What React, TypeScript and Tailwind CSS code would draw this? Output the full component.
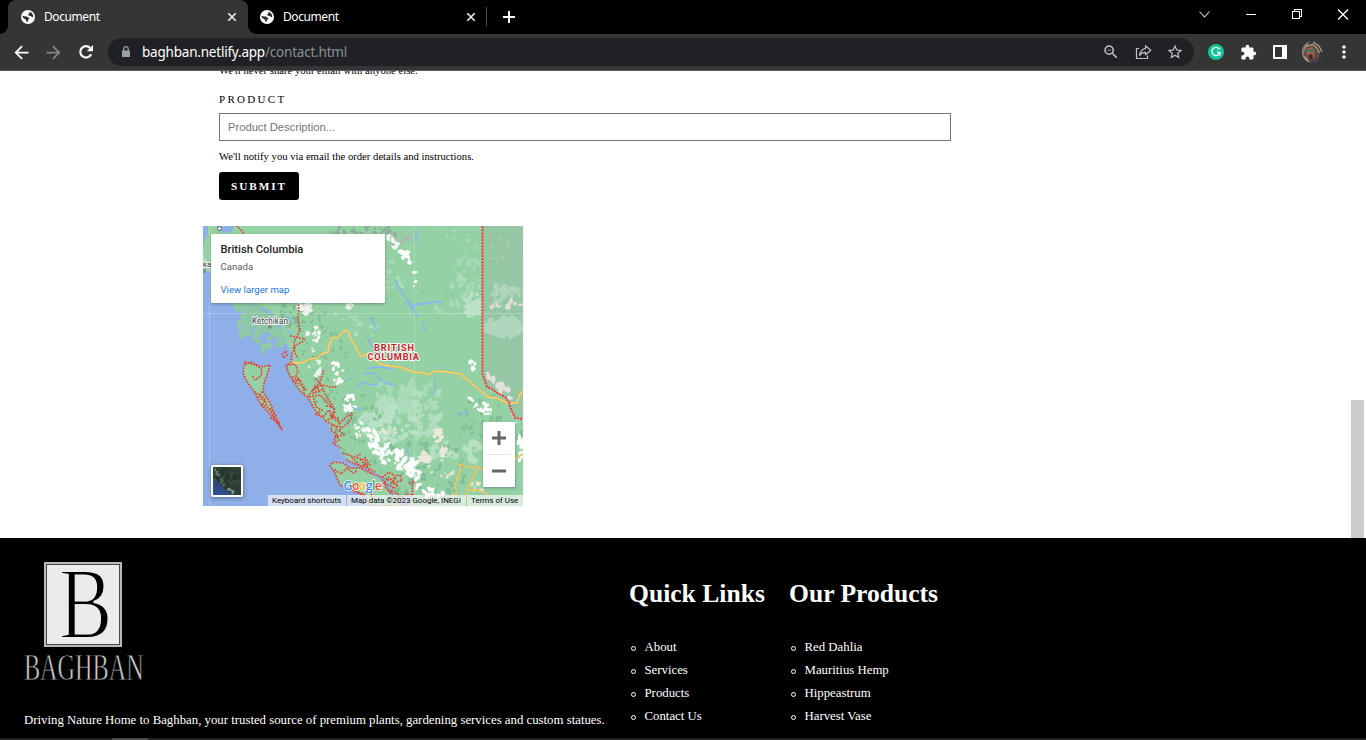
import type { ReactNode } from "react";
import {
  MdArrowBack,
  MdArrowForward,
  MdExtension,
  MdMoreVert,
  MdStarBorder,
  MdZoomOut,
} from "react-icons/md";

function createRandom(seed: number) {
  let s = seed;
  return () => {
    s = (s * 16807) % 2147483647;
    return s / 2147483647;
  };
}

type Patch = { x: number; y: number; rx: number; ry: number; n: number; size: number; fill: string; lean?: number };

// Groups of small terrain shapes: snow, grassland, bare ground and relief shading.
const patches: Patch[] = [
  { x: 185, y: 168, rx: 26, ry: 14, n: 22, size: 8, fill: "#a9dbb8" },
  { x: 200, y: 190, rx: 38, ry: 26, n: 44, size: 10, fill: "#b0debe" },
  { x: 188, y: 198, rx: 30, ry: 20, n: 24, size: 11, fill: "#b8e1c5" },
  { x: 216, y: 172, rx: 22, ry: 18, n: 26, size: 8, fill: "#abdcba" },
  { x: 250, y: 225, rx: 30, ry: 14, n: 18, size: 9, fill: "#b7e0c3" },
  { x: 272, y: 80, rx: 9, ry: 12, n: 14, size: 10, fill: "#b9e1c5" },
  { x: 262, y: 60, rx: 18, ry: 10, n: 14, size: 7, fill: "#aadbb8" },
  { x: 265, y: 38, rx: 14, ry: 8, n: 12, size: 7, fill: "#a6d9b4" },
  { x: 248, y: 82, rx: 16, ry: 8, n: 7, size: 6, fill: "#abdcba" },
  { x: 258, y: 18, rx: 24, ry: 14, n: 10, size: 4, fill: "#a5dab3" },
  { x: 190, y: 55, rx: 12, ry: 20, n: 14, size: 5, fill: "#addeb9" },
  { x: 150, y: 100, rx: 25, ry: 18, n: 12, size: 5, fill: "#addeb9" },
  { x: 88, y: 85, rx: 12, ry: 16, n: 36, size: 4, fill: "#7fb394" },
  { x: 110, y: 95, rx: 16, ry: 20, n: 22, size: 4, fill: "#85b996" },
  { x: 120, y: 140, rx: 26, ry: 38, n: 66, size: 4, fill: "#84bf96" },
  { x: 155, y: 205, rx: 25, ry: 40, n: 60, size: 4, fill: "#83be95" },
  { x: 215, y: 245, rx: 55, ry: 30, n: 90, size: 5, fill: "#80bc94" },
  { x: 290, y: 200, rx: 35, ry: 36, n: 50, size: 5, fill: "#81be95" },
  { x: 220, y: 90, rx: 65, ry: 60, n: 40, size: 2.5, fill: "#89c89c" },
  { x: 159, y: 6, rx: 36, ry: 8, n: 30, size: 5, fill: "#8dab9c" },
  { x: 194, y: 14, rx: 15, ry: 8, n: 16, size: 5, fill: "#a7bbae" },
  { x: 190, y: 16, rx: 6, ry: 8, n: 12, size: 5, fill: "#f4f6f2", lean: 0.9 },
  { x: 204, y: 30, rx: 6, ry: 12, n: 14, size: 5, fill: "#ffffff", lean: 0.6 },
  { x: 212, y: 56, rx: 2, ry: 11, n: 4, size: 4, fill: "#ffffff" },
  { x: 101, y: 83, rx: 6, ry: 6, n: 16, size: 7, fill: "#edf2ea" },
  { x: 148, y: 80, rx: 5, ry: 3, n: 7, size: 5, fill: "#e9efe6" },
  { x: 110, y: 113, rx: 7, ry: 15, n: 12, size: 5, fill: "#f1f6ef" },
  { x: 112, y: 142, rx: 6, ry: 9, n: 8, size: 5, fill: "#eaf3e9" },
  { x: 134, y: 146, rx: 7, ry: 12, n: 14, size: 5, fill: "#f7f9f5" },
  { x: 146, y: 178, rx: 7, ry: 9, n: 17, size: 5, fill: "#ffffff" },
  { x: 155, y: 204, rx: 7, ry: 10, n: 10, size: 5, fill: "#f4f7f2" },
  { x: 170, y: 214, rx: 6, ry: 22, n: 26, size: 6, fill: "#ffffff", lean: 1 },
  { x: 183, y: 228, rx: 6, ry: 9, n: 12, size: 6, fill: "#ffffff" },
  { x: 204, y: 237, rx: 14, ry: 20, n: 34, size: 6, fill: "#ffffff", lean: 0.5 },
  { x: 215, y: 252, rx: 5, ry: 10, n: 12, size: 5, fill: "#f7f8f4" },
  { x: 231, y: 267, rx: 10, ry: 5, n: 13, size: 5, fill: "#ffffff" },
  { x: 279, y: 181, rx: 13, ry: 12, n: 20, size: 5, fill: "#ffffff", lean: 0.6 },
  { x: 269, y: 139, rx: 4, ry: 6, n: 6, size: 5, fill: "#ffffff" },
  { x: 314, y: 189, rx: 7, ry: 8, n: 14, size: 5, fill: "#efece6" },
  { x: 317, y: 222, rx: 3, ry: 16, n: 12, size: 5, fill: "#ffffff" },
  { x: 235, y: 210, rx: 5, ry: 6, n: 10, size: 7, fill: "#ede9dc" },
  { x: 241, y: 226, rx: 3, ry: 14, n: 12, size: 5, fill: "#ede9dc", lean: 0.8 },
  { x: 221, y: 232, rx: 5, ry: 6, n: 12, size: 7, fill: "#ebe7d9" },
  { x: 185, y: 209, rx: 9, ry: 10, n: 9, size: 5, fill: "#e7e5d6" },
  { x: 236, y: 245, rx: 16, ry: 11, n: 9, size: 4, fill: "#e6e5d3" },
  { x: 275, y: 260, rx: 8, ry: 7, n: 8, size: 5, fill: "#ebe6d4" },
];

const eastPatches: Patch[] = [
  { x: 302, y: 70, rx: 18, ry: 10, n: 24, size: 8, fill: "#aed4ba" },
  { x: 302, y: 101, rx: 20, ry: 8, n: 38, size: 10, fill: "#b1d6bf" },
  { x: 298, y: 20, rx: 18, ry: 18, n: 10, size: 5, fill: "#a4cdb1" },
  { x: 302, y: 79, rx: 18, ry: 5, n: 13, size: 5, fill: "#e4ddd9" },
  { x: 296, y: 160, rx: 13, ry: 10, n: 22, size: 6, fill: "#e3e1db", lean: 0.8 },
];

const islandPatches: Patch[] = [
  { x: 42, y: 84, rx: 14, ry: 8, n: 22, size: 8, fill: "#8fc9a6" },
  { x: 58, y: 90, rx: 18, ry: 13, n: 46, size: 9, fill: "#8dc4a5" },
  { x: 43, y: 103, rx: 8, ry: 15, n: 18, size: 7, fill: "#8fc9a6" },
  { x: 60, y: 112, rx: 9, ry: 14, n: 18, size: 7, fill: "#8fc9a6" },
  { x: 75, y: 106, rx: 9, ry: 16, n: 30, size: 8, fill: "#8fc9a6" },
  { x: 4, y: 22, rx: 6, ry: 24, n: 30, size: 7, fill: "#8fc9a6" },
  { x: 4, y: 38, rx: 5, ry: 12, n: 9, size: 5, fill: "#c2d6ca" },
];

function renderPatches(items: Patch[], seed: number): ReactNode[] {
  const rand = createRandom(seed);
  return items.map((p, i) => {
    let d = "";
    for (let k = 0; k < p.n; k++) {
      const a = rand() * Math.PI * 2;
      const q = Math.sqrt(rand());
      const ox = Math.cos(a) * q * p.rx;
      const cx = p.x + ox;
      const cy = p.y + Math.sin(a) * q * p.ry * (p.lean ? 0.6 : 1) + ox * (p.lean ?? 0);
      const r = p.size * (0.3 + rand() * 0.5);
      const tilt = rand() * 3;
      for (let j = 0; j < 8; j++) {
        const t = (j / 8) * Math.PI * 2;
        const m = r * (0.5 + rand() * 0.65);
        const px = Math.cos(t) * m;
        const py = Math.sin(t) * m * 0.65;
        const x = cx + px * Math.cos(tilt) - py * Math.sin(tilt);
        const y = cy + px * Math.sin(tilt) + py * Math.cos(tilt);
        d += `${j ? "L" : "M"}${x.toFixed(1)} ${y.toFixed(1)}`;
      }
      d += "Z";
    }
    return <path key={i} d={d} fill={p.fill} />;
  });
}

const mainland =
  "M0 0H320V280H204L210 269 199 273 188 268 184 258 178 250 164 243 154 238 145 235 140 229 134 220 132 211 125 197 112 187 108 175 97 166 89 154 84 139 91 132 88 126 84 118 80 106 76 92 66 84 56 78 42 70 22 60 8 52 5 36 0 30Z";
const haida =
  "M42 136L52 139 58 141 67 139 64 149 61 157 60 166 67 177 72 189 79 204 69 190 58 179 52 167 43 154 40 147Z";
const vancouver =
  "M127 240L130 236 140 237 147 242 157 242 167 247 178 251 184 262 190 270 200 280H168L160 268 150 264 143 262 137 259 132 247Z";
const highway =
  "M87 136L94 137 99 137 107 133 115 132 118 128 125 126 126 119 129 112 135 112 138 108 142 104 146 107 147 112 152 119 156 128 159 131 165 127 172 134 177 138 186 140 197 141 208 145 214 147 219 146 225 149 232 145 245 146 257 148 266 155 274 162 285 171 293 172 304 177 314 177 317 168 320 165";
const eastRegion = "M280 0H320V196L312 192 307 181 302 171 294 167 284 161 280 148Z";
const eastBorder = "M279.500 0V149L282 155 284 161 289 163 294 167 302 171 306 176 307 181 312 192 320 193";

function MapDrawing() {
  return (
    <svg width="320" height="280" viewBox="0 0 320 280" className="block">
      <defs>
        <clipPath id="land">
          <path d={mainland} />
        </clipPath>
        <clipPath id="east">
          <path d={eastRegion} />
        </clipPath>
      </defs>
      <rect width="320" height="280" fill="#8fafe8" />
      {renderPatches(islandPatches, 913)}
      <path d={mainland} fill="#94d2a5" />
      <g clipPath="url(#land)">{renderPatches(patches, 481)}</g>
      <path d={eastRegion} fill="#95c7a4" />
      <g clipPath="url(#east)">{renderPatches(eastPatches, 77)}</g>
      <path d={haida} fill="#94d2a5" />
      <path d={vancouver} fill="#94d2a5" />
      <path d="M0 0H5V8L2 14 0 20ZM14 0H31L28 6 20 7Z" fill="#8fafe8" />
      <g fill="none" stroke="#8ab4f0" strokeLinecap="round" strokeLinejoin="round">
        <path d="M192 54L197 64 203 72 208 79 214 90" strokeWidth="1.800" />
        <path d="M204 75L208 80 211 85M207 80L217 78 226 77 233 75 239 77M219 96L222 104" strokeWidth="1.800" />
        <path d="M167 91L172 99 175 105M164 110L167 117 172 125M213 3V16M250 69V71" strokeWidth="1.500" />
        <path d="M84 90L88 96M84 104L88 108" strokeWidth="1.500" />
        <path d="M160 148L171 147 178 154 184 157 192 160M152 162L160 156 168 159 175 158" strokeWidth="1.400" />
        <path d="M164 142L178 141 190 143M254 189L261 186 267 187" strokeWidth="1.300" />
        <path d="M231 151L233 161 230 169M203 221L206 230M238 138L241 145M298 242L301 235M144 155L151 150" strokeWidth="1" />
        <path d="M149 181L156 184 161 182M140 194L147 199M111 162L116 153M126 188L131 181" strokeWidth="1.200" />
        <path d="M312 243V262" strokeWidth="2" />
        <path d="M173 249L185 259 189 270" strokeWidth="2.500" />
        <path d="M203 222L206 230" strokeWidth="1.500" />
      </g>
      <path d="M6.500 0V280M211.500 0V280M0 87.500H320" stroke="#fff" strokeOpacity=".22" fill="none" />
      <g fill="none" strokeLinejoin="round">
        <path d={highway} stroke="#e9b955" strokeWidth="2" />
        <path d={highway} stroke="#fddc7d" strokeWidth="1" />
        <path d="M254 267L252 262 254 252 256 250 258 240 255 238 262 240 270 242 273 240 277 243 285 244M262 273L265 262 268 256 271 249 274 243M266 264L275 264 285 268M312 233L320 228M247 271L254 267" stroke="#eac469" strokeWidth="1.800" />
      </g>
      <g fill="none" stroke="#e5443a" strokeWidth="1.900" strokeLinecap="round" strokeLinejoin="round" strokeDasharray="0.1 2.900">
        <path d="M34 0L40 6 43 12M95 76L96 84 95 93 97 104 94 110 91 116 92 123 89 127 88 137 83 140 86 148 90 154 97 165 105 172 112 184 124 196" />
        <path d={haida} />
        <path d={vancouver} />
        <path d="M43 138L48 136 54 139 59 144 58 150 52 154 50 151M52 166L61 172 64 181 70 189 75 199M59 166L56 171 63 176 58 179 68 183 73 190 68 192 77 197" />
        <path d="M88 110L97 112 102 113 99 116 93 119 90 121 92 127 95 132M79 128L83 125 84 129 81 132Z" />
        <path d="M84 139L92 138 95 145 93 150 97 154 89 155 97 158 101 163 101 168" />
        <path d="M105 170L110 164 117 156 121 144M110 164L118 159 128 161 133 161M107 171L117 169 125 177 131 183 130 192 137 197 144 190 149 187 148 193 144 198 136 204 141 209 130 211" />
        <path d="M111 173L113 181 119 184 112 188 120 191 126 184 130 191 123 195 134 201 132 207 136 214 130 217 139 223" />
        <path d="M124 180L131 181 132 187 127 190 135 192 137 201 129 199 128 204 134 209 131 214M112 160L116 164 109 168 119 164" />
        <path d="M140 227L151 231 162 234 167 239 157 240 149 232 158 228M144 234L152 238 164 242 169 248M159 242L164 234 161 231" />
        <path d="M113 153L119 160 122 168 125 173 129 178 127 181M90 151L98 156 103 164" />
        <path d="M180 251L186 246 192 250 197 249 199 254 191 257 185 251 181 257 190 261 188 266 194 267 199 273 203 268 210 269 209 261 211 255 207 257" />
        <path d="M185 254L193 252 188 257 195 259 190 263M187 266L181 260M158 234L164 241 172 246" />
        <path d="M132 244L138 248 144 242 150 247 154 245M152 266L160 269 166 264 170 272 176 276" />
      </g>
      <path d={eastBorder} fill="none" stroke="#c9a798" strokeWidth="2" />
      <path d={eastBorder} fill="none" stroke="#e5443a" strokeWidth="2" strokeDasharray="2 1.200" />
      <g fontFamily="Roboto, sans-serif" stroke="#fff" strokeWidth="1.800" paintOrder="stroke" strokeLinejoin="round">
        <text x="49" y="97.600" fontSize="8.200" fill="#3c4043" strokeOpacity=".8" textLength="36">Ketchikan</text>
        <text x="0" y="41" fontSize="8" fill="#3c4043" strokeOpacity=".8">ka</text>
        <text x="171" y="125" fontSize="9.200" fontWeight="700" fill="#c5221f" textLength="40">BRITISH</text>
        <text x="164.500" y="133.800" fontSize="9.200" fontWeight="700" fill="#c5221f" textLength="51.500">COLUMBIA</text>
      </g>
      <g fill="#fff" stroke="#555" strokeWidth="1">
        <circle cx="67" cy="101" r="1.200" />
        <circle cx="16.500" cy="2.500" r="2" />
        <circle cx="1" cy="45" r="1.200" />
      </g>
      <text x="140.500" y="263.500" fontFamily="'Open Sans', sans-serif" fontSize="12.500" fontWeight="600" textLength="38.500" stroke="#fff" strokeWidth="1.400" paintOrder="stroke" strokeLinejoin="round">
        <tspan fill="#4285f4">G</tspan>
        <tspan fill="#ea4335">o</tspan>
        <tspan fill="#fbbc05">o</tspan>
        <tspan fill="#4285f4">g</tspan>
        <tspan fill="#34a853">l</tspan>
        <tspan fill="#ea4335">e</tspan>
      </text>
    </svg>
  );
}

const thumbPatches: Patch[] = [
  { x: 16, y: 9, rx: 13, ry: 9, n: 26, size: 5, fill: "#24332c" },
  { x: 18, y: 14, rx: 10, ry: 9, n: 18, size: 4, fill: "#384a3d" },
  { x: 4, y: 5, rx: 3, ry: 5, n: 9, size: 3, fill: "#778882" },
  { x: 9, y: 14, rx: 3, ry: 6, n: 9, size: 3, fill: "#50645b", lean: 0.8 },
  { x: 18, y: 24, rx: 4, ry: 3, n: 7, size: 3, fill: "#8f9a90", lean: 0.8 },
];

function SatelliteThumb() {
  return (
    <svg width="28" height="28" viewBox="0 0 28 28" className="block">
      <rect width="28" height="28" fill="#2d3f35" />
      {renderPatches(thumbPatches, 35)}
      <path d="M0 11L3 12 6 17 10 20 14 24 19 28H0Z" fill="#304c8a" />
      <path d="M2 13L3 15 5 20 6 22 4 19Z" fill="#22332e" />
    </svg>
  );
}

function ContactMap() {
  return (
    <div className="relative -ml-4 mt-[26px] h-[280px] w-[320px] overflow-hidden font-['Roboto',sans-serif]">
      <MapDrawing />
      <div className="absolute left-2 top-2 flex h-[69px] w-[174px] flex-col rounded-[1px] bg-white pl-[9.500px] pt-2 shadow-[0_1px_3px_rgba(0,0,0,0.3)]">
        <div className="h-[15px] text-[11.200px] font-medium leading-[15px] text-[#222]">British Columbia</div>
        <div className="mt-[3px] h-[14px] text-[9.600px] leading-[14px] text-[#5b5b5b]">Canada</div>
        <div className="mt-[9px] h-[14px] text-[9.600px] leading-[14px] text-[#1a73e8]">View larger map</div>
      </div>
      <div className="absolute left-2 top-[239px] rounded-[2px] border-2 border-white shadow-[0_1px_4px_rgba(0,0,0,0.4)]">
        <SatelliteThumb />
      </div>
      <div className="absolute left-[280px] top-[196px] flex h-[65px] w-8 flex-col items-center rounded-[1px] bg-white shadow-[0_1px_3px_rgba(0,0,0,0.3)]">
        <svg width="32" height="65" viewBox="0 0 32 65">
          <path d="M9 16H23M16 9V23M9 49H23" stroke="#666" strokeWidth="3" />
          <path d="M4 32.500H28" stroke="#e6e6e6" />
        </svg>
      </div>
      <div className="absolute bottom-0 right-0 flex h-[11px] gap-px text-[8px] leading-[11px] text-black">
        <span className="w-[78px] whitespace-nowrap bg-[#f5f5f5]/70 pl-1 tracking-[-0.010px]">Keyboard shortcuts</span>
        <span className="w-[119px] whitespace-nowrap bg-[#f5f5f5]/70 pl-1 tracking-[-0.030px]">Map data ©2023 Google, INEGI</span>
        <span className="w-[56px] whitespace-nowrap bg-[#f5f5f5]/70 pl-1">Terms of Use</span>
      </div>
    </div>
  );
}

function Globe() {
  return (
    <svg width="14" height="14" viewBox="0 0 14 14">
      <circle cx="7" cy="7" r="7" fill="#fff" />
      <path d="M1.600 5.800L4 6.500 5.500 6.200 6.500 7.300 8 7.700 8.400 9 7 9.800 6.600 11.900 5.300 11.500 5 9.800 3.200 8.700 1.600 7.200Z" fill="#2b2b2b" />
      <path d="M8 1.900L10.300 2.600 11.800 4.400 12.300 6.800 11.200 7.200 9.800 5.900 7.600 5.500 6.900 4.500 8.500 3.700Z" fill="#2b2b2b" />
    </svg>
  );
}

function TabClose() {
  return (
    <svg width="10" height="10" viewBox="0 0 10 10">
      <path d="M1.300 1.300L8.700 8.700M8.700 1.300L1.300 8.700" stroke="#f1f1f1" strokeWidth="1.600" />
    </svg>
  );
}

function TabStrip() {
  return (
    <div className="flex h-[34px] shrink-0 bg-black text-[12px] text-white">
      <div className="relative ml-2 flex h-[34px] w-[240px] items-center rounded-t-lg bg-[#353535] pl-[13px]">
        <span className="absolute -left-2 bottom-0 size-2 bg-[radial-gradient(circle_at_0_0,#000_7.500px,#353535_8px)]" />
        <span className="absolute -right-2 bottom-0 size-2 bg-[radial-gradient(circle_at_100%_0,#000_7.500px,#353535_8px)]" />
        <Globe />
        <span className="ml-[9px] w-[183px] tracking-[-0.420px]">Document</span>
        <TabClose />
      </div>
      <div className="flex h-[34px] w-[239px] items-center pl-3">
        <Globe />
        <span className="ml-[9px] w-[183px] tracking-[-0.420px]">Document</span>
        <TabClose />
        <span className="ml-[10px] h-[20px] w-px bg-[#4a4a4a]" />
      </div>
      <svg width="12" height="12" viewBox="0 0 12 12" className="ml-4 mt-[11px]">
        <path d="M6 0V12M0 6H12" stroke="#fff" strokeWidth="2" />
      </svg>
      <svg width="160" height="28" viewBox="0 0 160 28" className="ml-auto mr-[9px]" fill="none" stroke="#fff">
        <path d="M2.500 11.500L7.500 17 12.500 11.500" strokeWidth="1.100" stroke="#d5d5d5" />
        <path d="M49 14.500H59" shapeRendering="crispEdges" />
        <path d="M95.500 11.500H102.500V18.500H95.500ZM97.500 11.500V9.500H104.500V16.500H102.500" shapeRendering="crispEdges" />
        <path d="M141 9.500L151 19.500M151 9.500L141 19.500" strokeWidth="1.300" />
      </svg>
    </div>
  );
}

function Avatar() {
  return (
    <svg width="22" height="22" viewBox="0 0 22 22">
      <defs>
        <clipPath id="face">
          <circle cx="11" cy="11" r="11" />
        </clipPath>
      </defs>
      <g clipPath="url(#face)">
        <rect width="22" height="22" fill="#5d4c42" />
        <path d="M0 0H10L4 7 1 14H0Z" fill="#8b8075" />
        <path d="M8 0H22V22H15L18 13 14 6 5 4Z" fill="#35353b" />
        <path d="M4 5L11 3.500 15 7 17.500 12M11 1L17 5 20 11" stroke="#b5a07b" strokeWidth="1.300" fill="none" />
        <path d="M4 8L10 6 13 9 12 17 9 19 5 15Z" fill="#a0604c" />
        <path d="M3 8.500H7L8 9 13 7.500V9.500L9 11.500 7 10 4 11Z" fill="#3c6f66" />
        <path d="M6 14L10 13 11 17 8 19Z" fill="#44292a" />
        <path d="M0 13L5 17 8 22H0Z" fill="#a99c90" />
        <path d="M9 19L15 17V22H9Z" fill="#4c3a4c" />
      </g>
    </svg>
  );
}

function Toolbar() {
  return (
    <div className="flex h-[37px] shrink-0 items-center border-b border-[#5c5a5c] bg-[#353535] text-white">
      <MdArrowBack size={21} className="ml-[11px]" />
      <MdArrowForward size={21} className="ml-[11px] text-[#858585]" />
      <svg width="20" height="20" viewBox="0 0 20 20" className="ml-3">
        <path d="M15.200 12.200A5.700 5.700 0 1 1 14.200 6" fill="none" stroke="currentColor" strokeWidth="2.100" />
        <path d="M17 3V9.200H10.800Z" fill="currentColor" />
      </svg>
      <div className="ml-3 flex h-7 w-[1086px] items-center rounded-full bg-[#202124]">
        <svg width="8" height="12" viewBox="0 0 8 12" className="ml-[14px] text-[#9aa0a6]">
          <path d="M0 4.500H8V11H0Z" fill="currentColor" />
          <path d="M1.800 5V2.800A2.200 2.200 0 0 1 6.200 2.800V5" fill="none" stroke="currentColor" strokeWidth="1.200" />
        </svg>
        <span className="ml-3 whitespace-nowrap text-[13.500px] tracking-[-0.210px] text-[#8b8f94]">
          <span className="text-white">baghban.netlify.app</span>/contact.html
        </span>
        <div className="ml-auto mr-[10px] flex items-center text-[#bdc1c6]">
          <MdZoomOut size={18} />
          <svg width="17" height="16" viewBox="0 0 17 16" fill="none" stroke="currentColor" strokeWidth="1.200" className="ml-[15px] mr-[14px]">
            <path d="M4 4.500H1.500V14.500H12.500V11.500" />
            <path d="M10.500 1.800L15.800 6.200 10.500 10.800V8.300C8 8.300 6 9.300 4.600 11.500 5 8 7 5 10.500 4.300Z" strokeLinejoin="round" />
          </svg>
          <MdStarBorder size={18} />
        </div>
      </div>
      <div className="ml-[14px] flex size-4 items-center justify-center rounded-full bg-[#15c39a]">
        <svg width="10" height="10" viewBox="0 0 10 10" fill="none" stroke="#fff" strokeWidth="1.300">
          <path d="M8.500 2.300A4.100 4.100 0 1 0 9 5.500H6M9 5.500V8.500" />
        </svg>
      </div>
      <MdExtension size={17} className="ml-4" />
      <svg width="14" height="14" viewBox="0 0 14 14" className="ml-4">
        <path d="M0 0H14V14H0ZM2 2V12H9V2Z" fill="#fff" fillRule="evenodd" />
      </svg>
      <div className="ml-[15px]">
        <Avatar />
      </div>
      <MdMoreVert size={20} className="ml-[10px]" />
    </div>
  );
}

function Logo() {
  return (
    <svg width="120" height="122" viewBox="0 0 120 122" className="block overflow-visible" fontFamily="'Liberation Serif', serif">
      <rect x="20" y="0" width="78" height="85" fill="#b9b9b9" />
      <rect x="22.500" y="2.500" width="73" height="80" fill="#ebebeb" stroke="#444b44" />
      <text transform="translate(35 75.500) scale(0.790 1)" fontSize="101" fill="#000" stroke="#ebebeb" strokeWidth="2">B</text>
      <text transform="translate(0 117.500) scale(0.630 1)" fontSize="38.500" fill="#d0d0d0" stroke="#000" strokeWidth="0.800" textLength="190" lengthAdjust="spacing">BAGHBAN</text>
    </svg>
  );
}

function LinkColumn({ title, items }: { title: string; items: string[] }) {
  return (
    <div className="w-[160px] shrink-0 pt-10">
      <h2 className="h-8 whitespace-nowrap text-[25.600px] font-bold leading-8">{title}</h2>
      <ul className="mt-[26px]">
        {items.map((item) => (
          <li key={item} className="flex h-[23px] items-center text-[12.800px]">
            <span className="ml-[1.500px] mr-[9px] mt-px size-[5px] rounded-full border border-white" />
            {item}
          </li>
        ))}
      </ul>
    </div>
  );
}

export default function App() {
  return (
    <div className="flex h-[740px] w-[1366px] flex-col overflow-hidden bg-white font-['Noto_Sans',sans-serif]">
      <TabStrip />
      <Toolbar />
      <main className="flex h-[467px] shrink-0 justify-between font-['Liberation_Serif',serif] text-black">
        <form className="ml-[219px] flex w-[732px] flex-col items-start">
          <div className="flex h-[7px] items-end overflow-hidden text-[10.670px] leading-4">We'll never share your email with anyone else.</div>
          <label className="mt-[13px] h-4 text-[11px] leading-4 tracking-[2.300px]">PRODUCT</label>
          <input
            type="text"
            placeholder="Product Description..."
            className="mt-1.5 h-7 w-full border border-[#767676] px-2 font-['Liberation_Sans',sans-serif] text-[11.200px] placeholder:text-[#757575]"
          />
          <div className="mt-[7px] h-4 text-[10.670px] leading-4">We'll notify you via email the order details and instructions.</div>
          <button type="button" className="mt-2 h-7 w-20 rounded-[3px] bg-black text-[11.200px] font-bold tracking-[1.950px] text-white">
            SUBMIT
          </button>
          <ContactMap />
        </form>
        <div className="mr-0.5 mt-[329px] h-[138px] w-[13px] bg-[#cbcbcb]" />
      </main>
      <footer className="flex h-[200px] shrink-0 bg-black pl-6 font-['Liberation_Serif',serif] text-white">
        <div className="w-[605px] shrink-0 pt-6">
          <Logo />
          <p className="mt-[28px] h-4 whitespace-nowrap text-[12.800px] leading-4">
            Driving Nature Home to Baghban, your trusted source of premium plants, gardening services and custom statues.
          </p>
        </div>
        <LinkColumn title="Quick Links" items={["About", "Services", "Products", "Contact Us"]} />
        <LinkColumn title="Our Products" items={["Red Dahlia", "Mauritius Hemp", "Hippeastrum", "Harvest Vase"]} />
      </footer>
      <div className="h-0.5 shrink-0 bg-[#232021]">
        <div className="ml-28 h-full w-9 bg-[#4a4848]" />
      </div>
    </div>
  );
}
